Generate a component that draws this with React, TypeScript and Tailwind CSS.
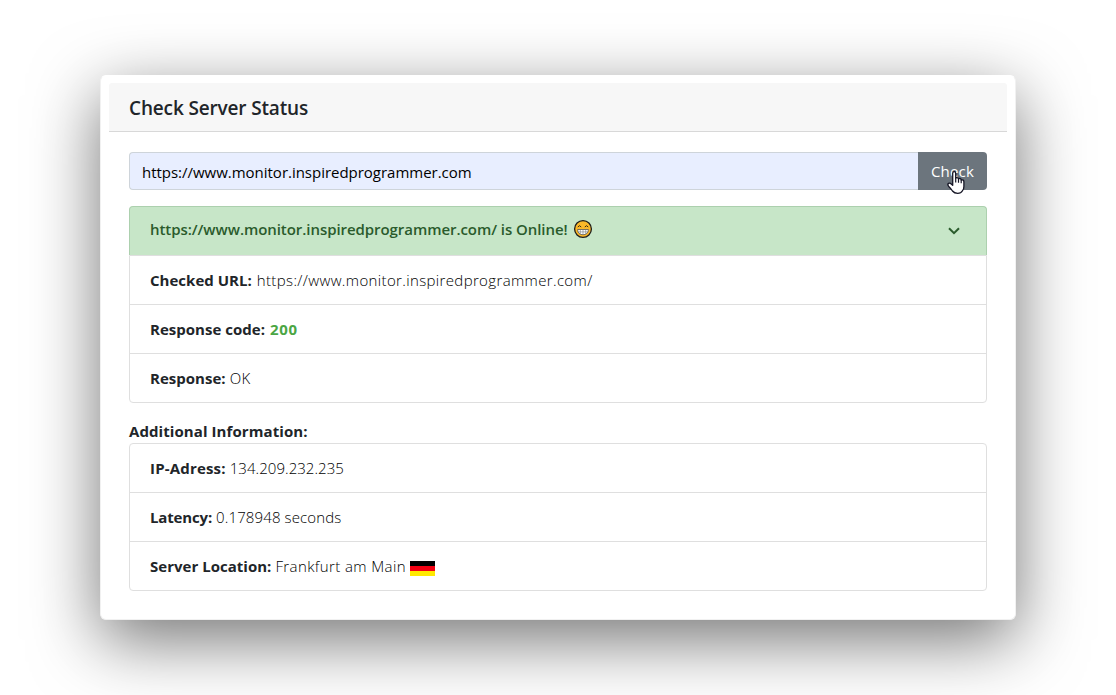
import type { ReactNode } from "react";

function Row({ label, labelClass = "tracking-[0.020px]", children }: { label: string; labelClass?: string; children: ReactNode }) {
  return (
    <li className="flex h-[49px] items-center gap-[5px] border-b border-[#dfdfdf] pl-5 last:h-12 last:border-b-0 last:pb-px">
      <strong className={`font-bold ${labelClass}`}>{label}</strong>
      {children}
    </li>
  );
}

function GrinningFace() {
  return (
    <svg width="20" height="20" viewBox="0 0 20 20" aria-hidden="true">
      <circle cx="10" cy="10" r="8.4" fill="#fbb829" stroke="#1d1d1b" strokeWidth="1.300" />
      <path d="M4.800 8Q6.500 5.400 8.200 8M11.800 8Q13.500 5.400 15.200 8" fill="none" stroke="#3a2c10" strokeWidth="1" />
      <path d="M4.600 10.500H15.400Q15.200 15.700 10 15.700Q4.800 15.700 4.600 10.500Z" fill="#fff" stroke="#444" strokeWidth="0.700" />
      <path d="M4.800 12.900H15.200M7.300 10.500V15M10 10.500V15.700M12.700 10.500V15" stroke="#777" strokeWidth="0.600" />
    </svg>
  );
}

function HandCursor() {
  return (
    <svg className="absolute left-[28px] top-[18px]" width="20" height="25" viewBox="0 0 20 25" aria-hidden="true">
      <path
        d="M6.700 14.500V3.300Q6.700 1.700 8.200 1.700Q9.700 1.700 9.700 3.300V8.200Q10 7.500 11 7.600Q12.300 7.700 12.500 9Q13 8.300 14 8.500Q15.100 8.800 15.200 10Q17.800 9.300 17.900 11.800V16.500Q17.900 19 16.500 20.700Q15 23.300 11.700 23.300Q8.300 23.300 6.500 21Q4.600 18.200 2.500 16.200Q1.200 14.300 2.500 13.400Q3.900 12.500 5.500 14.200L6.700 15.300Z"
        fill="#fff"
        stroke="#151525"
        strokeWidth="1.300"
        strokeLinejoin="round"
      />
      <path d="M9.700 8V12.500M12.500 9V12.800M15.200 10V13.200" stroke="#151525" strokeWidth="1.200" />
    </svg>
  );
}

function GermanFlag() {
  return (
    <svg className="mt-[5px] -ml-px" width="25" height="15" viewBox="0 0 25 15" aria-label="Germany">
      <rect width="25" height="5" fill="#000" />
      <rect y="5" width="25" height="5" fill="#f20012" />
      <rect y="10" width="25" height="5" fill="#ffe900" />
    </svg>
  );
}

export default function App() {
  return (
    <div className="h-[695px] w-full overflow-hidden bg-white px-[100px] pt-[75px] font-['Open_Sans',sans-serif] text-[15px] leading-6 text-[#212529]">
      <main className="h-[545px] w-[916px] rounded-[6px] border border-t-white border-[#f1f1f1] bg-white px-2 pt-[7px] shadow-[0_20px_68px_rgba(0,0,0,0.55)]">
        <header className="flex h-[49px] items-center rounded-t-[3px] border-b border-[#d8d8d8] bg-[#f7f7f7] pl-5 pt-[2px]">
          <h1 className="whitespace-nowrap text-[19px] font-semibold tracking-[-0.150px]">Check Server Status</h1>
        </header>
        <div className="px-5 pt-5">
          <form className="flex h-[38px]">
            <div className="flex flex-1 items-center rounded-l-[4px] border border-r-0 border-[#ced4da] bg-[#e8eeff] pl-3 pt-[2px] text-black">
              <span className="tracking-[-0.020px]">https://www.monitor.inspiredprogrammer.com</span>
            </div>
            <button type="button" className="relative w-[69px] rounded-r-[4px] bg-[#6c757d] text-white">
              <span className="tracking-[0.200px]">Check</span>
              <HandCursor />
            </button>
          </form>

          <section className="mt-4">
            <div className="flex h-[49px] items-center rounded-t-[4px] border border-b-0 border-[#acd0ae] bg-[#c7e6c8] pb-[3px] pl-5 pr-[26px] text-[#2a5b2c]">
              <span className="-mt-px font-semibold tracking-[-0.060px]">https://www.monitor.inspiredprogrammer.com/ is Online!</span>
              <span className="-mt-px ml-[5px]"><GrinningFace /></span>
              <svg className="ml-auto mt-[3px]" width="12" height="8" viewBox="0 0 12 8" fill="none" stroke="#2a5b2c" strokeWidth="2" aria-hidden="true">
                <path d="M1 1.200L6 6.200L11 1.200" />
              </svg>
            </div>
            <ul className="h-[148px] rounded-b-[4px] border border-[#dfdfdf]">
              <Row label="Checked URL:"><span className="font-light tracking-[0.360px] text-black">https://www.monitor.inspiredprogrammer.com/</span></Row>
              <Row label="Response code:"><span className="font-bold tracking-[0.700px] text-[#4ba644]">200</span></Row>
              <Row label="Response:"><span className="-ml-px font-light tracking-[0.500px] text-black">OK</span></Row>
            </ul>
          </section>

          <section className="mt-4">
            <h2 className="font-bold tracking-[0.080px]">Additional Information:</h2>
            <ul className="h-[148px] rounded-[4px] border border-[#dfdfdf]">
              <Row label="IP-Adress:" labelClass="tracking-[0.180px]"><span className="-ml-px font-light tracking-[0.050px] text-black">134.209.232.235</span></Row>
              <Row label="Latency:" labelClass="tracking-[-0.150px]"><span className="-ml-px font-light tracking-[0.120px] text-black">0.178948 seconds</span></Row>
              <Row label="Server Location:">
                <span className="-ml-px font-light tracking-[0.400px] text-black">Frankfurt am Main</span>
                <GermanFlag />
              </Row>
            </ul>
          </section>
        </div>
      </main>
    </div>
  );
}
